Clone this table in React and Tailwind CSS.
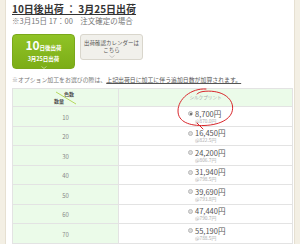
import React from 'react';

const rows = [
  { qty: 10, price: "8,700円", unit: "@870.0円", checked: true },
  { qty: 20, price: "16,450円", unit: "@822.5円" },
  { qty: 30, price: "24,200円", unit: "@806.7円" },
  { qty: 40, price: "31,940円", unit: "@798.5円" },
  { qty: 50, price: "39,690円", unit: "@793.8円" },
  { qty: 60, price: "47,440円", unit: "@790.7円" },
  { qty: 70, price: "55,190円", unit: "@788.5円" },
];

const Radio = ({ checked }) => (
  <span className="mt-[2.5px] mr-[2px] flex h-[5px] w-[5px] shrink-0 items-center justify-center rounded-full border border-[#b9b9b9] bg-[#dcdcdc]">
    {checked && <span className="h-[2px] w-[2px] rounded-full bg-[#555]" />}
  </span>
);

const Chevron = ({ color }) => (
  <svg width="6" height="3" viewBox="0 0 6 3" className="mx-auto">
    <path d="M0.5 0.5 L3 2.5 L5.5 0.5" fill="none" stroke={color} strokeWidth="0.6" />
  </svg>
);

export default function App() {
  return (
    <div className="h-[244px] w-[300px] overflow-hidden bg-[#f3efe4] font-['Noto_Sans_CJK_JP','Noto_Sans',sans-serif]">
      <div className="relative mx-[5px] h-full border-x border-[#e6e0d2] bg-white pl-[6px] pr-[1px] pt-[3px]">
        {/* headline */}
        <h1 className="text-[10px] font-bold leading-[12px] text-[#333] underline underline-offset-[1px]">
          10日後出荷 ： 3月25日出荷
        </h1>
        <p className="mt-[1px] text-[7.5px] leading-[10px] text-[#777]">※3月15日 17：00　注文確定の場合</p>

        {/* buttons */}
        <div className="mt-[8px] flex items-start gap-[5px]">
          <div className="flex h-[35px] w-[63px] flex-col items-center rounded-[4px] border border-[#7aa81a] bg-gradient-to-b from-[#90c326] to-[#7cad17] pt-[3px] text-white">
            <div className="flex items-baseline font-bold leading-[13px]">
              <span className="text-[12px]">10</span>
              <span className="text-[5.5px]">日後出荷</span>
            </div>
            <div className="text-[5.5px] font-bold leading-[9px]">3月25日出荷</div>
            <div className="mt-[2px]">
              <Chevron color="#e6f4c8" />
            </div>
          </div>
          <div className="flex h-[26px] w-[63px] flex-col items-center rounded-[3px] border border-[#d9d6cc] bg-[#f1f0eb] pt-[5px] text-[5.5px] leading-[7px] text-[#555]">
            <div>出荷確認カレンダーは</div>
            <div>こちら</div>
            <div className="mt-[1px]">
              <Chevron color="#aaa" />
            </div>
          </div>
        </div>

        <p className="mt-[6px] text-[5.9px] leading-[9px] text-[#777] whitespace-nowrap">
          ※オプション加工をお選びの際は、<span className="text-[#555] underline">上記出荷日に加工に伴う追加日数が加算されます。</span>
        </p>

        {/* table */}
        <div className="mt-[4px] border border-[#e3e3e3]">
          <div className="flex h-[18px] border-b border-[#e3e3e3] bg-[#ebfbe9]">
            <div className="relative w-[106px] border-r border-[#e3e3e3]">
              <svg className="absolute left-[42px] top-[2px]" width="22" height="14" viewBox="0 0 22 14">
                <path d="M1 1 L21 13" stroke="#a8cf3a" strokeWidth="0.8" />
              </svg>
              <span className="absolute left-[51px] top-[2px] text-[5px] font-bold leading-[6px] text-[#555]">色数</span>
              <span className="absolute left-[41px] top-[9px] text-[5px] font-bold leading-[6px] text-[#555]">数量</span>
            </div>
            <div className="flex flex-1 items-center justify-center text-[4.6px] text-[#aaa]">シルクプリント</div>
          </div>
          {rows.map((r) => (
            <div key={r.qty} className="flex h-[19.5px] border-b border-[#e3e3e3]">
              <div className="flex w-[106px] items-center justify-center border-r border-[#e3e3e3] bg-[#ebfbe9] pt-[2px] text-[6px] text-[#888]">
                {r.qty}
              </div>
              <div className="flex flex-1 items-start pl-[69px] pt-[1.5px]">
                <Radio checked={r.checked} />
                <div className="flex flex-col">
                  <span className="text-[7.5px] leading-[9px] text-[#555]">{r.price}</span>
                  <span className="text-[4.8px] leading-[6px] text-[#aaa]">{r.unit}</span>
                </div>
              </div>
            </div>
          ))}
        </div>

        {/* red hand-drawn circle, in page coordinates */}
        <svg className="pointer-events-none absolute left-[-6px] top-0" width="300" height="244" viewBox="0 0 300 244">
          <path
            d="M206 89 C191 88 178 99 178 111 C178 122 190 126 204 125.5 C221 125 234 118 232.5 106 C231 96 219 89.5 203 91.5 C200 92 198 93 197 94 M197 123 C199 125 201 127 203 129"
            fill="none"
            stroke="#d9262b"
            strokeWidth="1"
            strokeLinecap="round"
          />
        </svg>
      </div>
    </div>
  );
}
